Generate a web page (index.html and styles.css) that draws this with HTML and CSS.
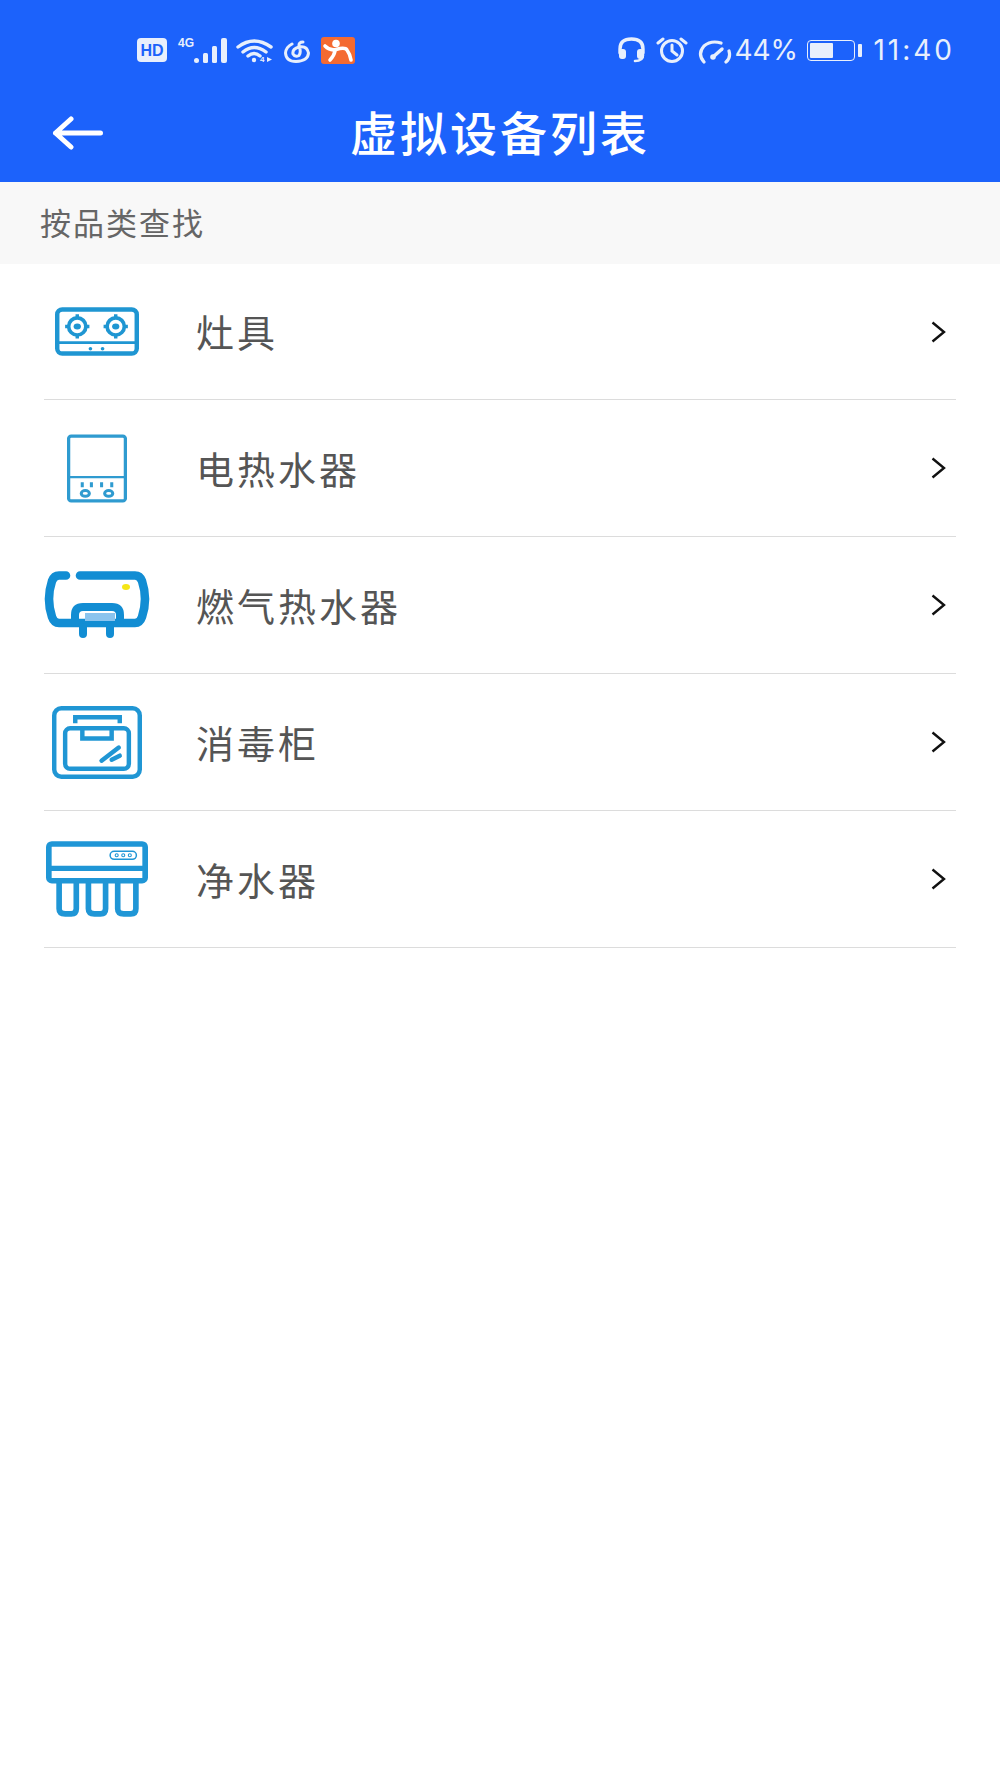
FILE: index.html
```html
<!DOCTYPE html>
<html lang="zh-CN">
<head>
    <meta charset="UTF-8">
    <meta name="viewport" content="width=device-width, initial-scale=1.0">
    <title>虚拟设备列表</title>
    <link rel="stylesheet" href="styles.css">
</head>
<body>
    <header class="header">
        <div class="status-bar">
            <div class="status-left">
                <svg class="st-hd" width="30" height="24" viewBox="0 0 30 24">
                    <rect width="30" height="24" rx="4" fill="#e8effc"/>
                    <text x="15" y="18" text-anchor="middle" class="hd-label">HD</text>
                </svg>
                <span class="st-net">4G</span>
                <svg class="st-signal" width="34" height="25" viewBox="0 0 34 25" fill="#e8effc">
                    <rect x="0" y="20" width="5" height="5" rx="2.5"/>
                    <rect x="9" y="15" width="5" height="10" rx="1.5"/>
                    <rect x="18" y="8" width="5" height="17" rx="1.5"/>
                    <rect x="27" y="0" width="6" height="25" rx="2"/>
                </svg>
                <svg class="st-wifi" width="37" height="25" viewBox="0 0 37 25" fill="none" stroke="#e8effc" stroke-width="3.4" stroke-linecap="round">
                    <path d="M2 9 Q18 -3 35 9"/>
                    <path d="M7 14 Q18 5 30 14"/>
                    <path d="M12 18 Q18 13 24 18"/>
                    <circle cx="18" cy="22" r="2.2" fill="#e8effc" stroke="none"/>
                    <text x="24" y="24" class="wifi-label" stroke="none" fill="#e8effc">4</text>
                    <path d="M31 19 L36 21.5 L31 24 Z" fill="#e8effc" stroke="none"/>
                </svg>
                <svg class="st-music" width="26" height="23" viewBox="0 0 26 23" fill="none" stroke="#e8effc" stroke-width="3" stroke-linecap="round">
                    <path d="M8 4 Q2 7 1.5 13 Q2 21.5 12 21.5 Q24 21 24.5 13 Q23 5.5 15 7 Q8 9 9 14 Q11 17.5 15 15.5 Q17.5 12 15 6 Q14.5 2 19 2"/>
                </svg>
                <svg class="st-app" width="34" height="27" viewBox="0 0 34 27">
                    <rect width="34" height="27" rx="3" fill="#f46a31"/>
                    <circle cx="15" cy="6.5" r="3.8" fill="#fff"/>
                    <path d="M4 9 Q9 14 15 12.5 Q24 10 26 13 Q29 17 30 23 M14 14 Q13 19 9 23" fill="none" stroke="#fff" stroke-width="3.6" stroke-linecap="round"/>
                </svg>
            </div>
            <div class="status-right">
                <svg class="st-phones" width="29" height="26" viewBox="0 0 29 26" fill="none" stroke="#e8effc" stroke-width="3.4" stroke-linecap="round">
                    <path d="M3 16 V12 Q3 2 14.5 2 Q26 2 26 12 V16"/>
                    <rect x="2" y="12" width="7" height="10" rx="3" fill="#e8effc" stroke="none"/>
                    <rect x="20" y="12" width="7" height="10" rx="3" fill="#e8effc" stroke="none"/>
                    <path d="M26 18 Q26 24 18 24" stroke-width="2.6"/>
                </svg>
                <svg class="st-alarm" width="32" height="26" viewBox="0 0 32 26" fill="none" stroke="#e8effc" stroke-width="3" stroke-linecap="round">
                    <circle cx="16" cy="14" r="10.5"/>
                    <path d="M16 8 V14 L21 18"/>
                    <path d="M2 6 L7 2 M30 6 L25 2"/>
                </svg>
                <svg class="st-gauge" width="35" height="24" viewBox="0 0 35 24" fill="none" stroke="#e8effc" stroke-width="3.2" stroke-linecap="round">
                    <path d="M7 22 Q0 14 7 6 Q14 0 24 3"/>
                    <path d="M32 11 Q34 18 29 22"/>
                    <path d="M16 17 L25 9" stroke-width="3.4"/>
                    <circle cx="16" cy="17" r="2.8" fill="#e8effc" stroke="none"/>
                </svg>
                <span class="st-battery-pct">44%</span>
                <div class="battery">
                    <div class="battery-body"><div class="battery-level" style="width: 53%"></div></div>
                    <div class="battery-tip"></div>
                </div>
                <span class="st-time">11:40</span>
            </div>
        </div>
        <div class="nav-bar">
            <svg class="back-arrow" width="51" height="34" viewBox="0 0 51 34" fill="none" stroke="#fff" stroke-width="5" stroke-linecap="round" stroke-linejoin="round">
                <path d="M48.5 17 H3.5 M19 3 L3.5 17 L19 31"/>
            </svg>
            <h1 class="nav-title">虚拟设备列表</h1>
        </div>
    </header>

    <div class="section-label">按品类查找</div>

    <ul class="device-list">
        <li class="device-row">
            <div class="device-icon">
                <svg width="84" height="49" viewBox="0 0 83 48" fill="none" stroke="#1f96d2" stroke-width="4.4">
                    <rect x="2.2" y="2.2" width="78.6" height="43.6" rx="5"/>
                    <path d="M2 35 H81" stroke-width="2.8"/>
                    <circle cx="22" cy="19" r="8.5" stroke-width="3.6"/>
                    <circle cx="60" cy="19" r="8.5" stroke-width="3.6"/>
                    <ellipse cx="22" cy="19" rx="3.6" ry="3" fill="#1f96d2" stroke="none"/>
                    <ellipse cx="60" cy="19" rx="3.6" ry="3" fill="#1f96d2" stroke="none"/>
                    <path d="M22 7 V11 M22 27 V31 M10 19 H14 M30 19 H34 M60 7 V11 M60 27 V31 M48 19 H52 M68 19 H72" stroke-width="3.4"/>
                    <circle cx="35" cy="41" r="1.8" fill="#1f96d2" stroke="none"/>
                    <circle cx="47" cy="41" r="1.8" fill="#1f96d2" stroke="none"/>
                </svg>
            </div>
            <span class="device-name">灶具</span>
            <svg class="chevron" width="15" height="22" viewBox="0 0 15 22" fill="none" stroke="#111" stroke-width="2.4"><path d="M1.5 1.5 L13 11 L1.5 20.5"/></svg>
        </li>
        <li class="device-row">
            <div class="device-icon">
                <svg width="60" height="69" viewBox="0 0 59 67" fill="none" stroke="#2f9bd0" stroke-width="3.2">
                    <rect x="1.6" y="1.6" width="55.8" height="63.8" rx="2.5"/>
                    <path d="M1.5 42 H57.5" stroke-width="2.4"/>
                    <path d="M15 47 V52 M24 47 V52 M34 47 V52 M44 47 V52" stroke-width="3"/>
                    <ellipse cx="18" cy="58" rx="4" ry="2.8" stroke-width="3"/>
                    <ellipse cx="41" cy="58" rx="4" ry="2.8" stroke-width="3"/>
                </svg>
            </div>
            <span class="device-name">电热水器</span>
            <svg class="chevron" width="15" height="22" viewBox="0 0 15 22" fill="none" stroke="#111" stroke-width="2.4"><path d="M1.5 1.5 L13 11 L1.5 20.5"/></svg>
        </li>
        <li class="device-row">
            <div class="device-icon">
                <svg width="107" height="70" viewBox="0 0 106 68" fill="none" stroke="#128dd3" stroke-width="8.6" stroke-linecap="round" stroke-linejoin="round">
                    <path d="M22 4.5 H15 Q10 4.5 8 10 Q2 28 8 46 Q10 52 15 52 H91 Q96 52 98 46 Q104 28 98 10 Q96 4.5 91 4.5 H36"/>
                    <path d="M31 52 V44 Q31 36 39 36 H68 Q76 36 76 44 V52" stroke-width="8"/>
                    <rect x="41" y="42" width="30" height="8" fill="#8bc4ee" stroke="none"/>
                    <path d="M39 56 V63 M66 56 V63" stroke-width="8"/>
                    <ellipse cx="82" cy="16" rx="4" ry="3" fill="#f5e616" stroke="none"/>
                </svg>
            </div>
            <span class="device-name">燃气热水器</span>
            <svg class="chevron" width="15" height="22" viewBox="0 0 15 22" fill="none" stroke="#111" stroke-width="2.4"><path d="M1.5 1.5 L13 11 L1.5 20.5"/></svg>
        </li>
        <li class="device-row">
            <div class="device-icon">
                <svg width="90" height="73" viewBox="0 0 89 72" fill="none" stroke="#2096d4" stroke-width="4.4" stroke-linecap="round">
                    <rect x="2.2" y="2.2" width="84.6" height="67.6" rx="7"/>
                    <rect x="13" y="22" width="63" height="40" rx="5"/>
                    <path d="M23 17 V11 H67 V17" stroke-linecap="butt"/>
                    <path d="M30 22 V32 H59 V22" stroke-linecap="butt"/>
                    <path d="M49 54 L66 41 M59 53 L67 49"/>
                </svg>
            </div>
            <span class="device-name">消毒柜</span>
            <svg class="chevron" width="15" height="22" viewBox="0 0 15 22" fill="none" stroke="#111" stroke-width="2.4"><path d="M1.5 1.5 L13 11 L1.5 20.5"/></svg>
        </li>
        <li class="device-row">
            <div class="device-icon">
                <svg width="102" height="76" viewBox="0 0 101 75" fill="none" stroke="#1f96d6" stroke-width="5.6">
                    <path d="M13 40 V67 Q13 72 19 72 H25 Q30 72 30 67 V40"/>
                    <path d="M42 40 V67 Q42 72 48 72 H54 Q59 72 59 67 V40"/>
                    <path d="M71 40 V67 Q71 72 77 72 H84 Q89 72 89 67 V40"/>
                    <rect x="2.8" y="2.8" width="95.4" height="36.4" rx="3"/>
                    <path d="M2 27 H99" stroke-width="5.4"/>
                    <rect x="63.5" y="10" width="26" height="8" rx="4" stroke-width="1.5"/>
                    <circle cx="70" cy="14" r="1.5" stroke-width="1.1"/>
                    <circle cx="76.5" cy="14" r="1.5" stroke-width="1.1"/>
                    <circle cx="83" cy="14" r="1.5" stroke-width="1.1"/>
                </svg>
            </div>
            <span class="device-name">净水器</span>
            <svg class="chevron" width="15" height="22" viewBox="0 0 15 22" fill="none" stroke="#111" stroke-width="2.4"><path d="M1.5 1.5 L13 11 L1.5 20.5"/></svg>
        </li>
    </ul>
</body>
</html>
```

FILE: styles.css
```css
* { box-sizing: border-box; }
html, body { margin: 0; padding: 0; }
body {
    width: 1000px;
    min-height: 1778px;
    background: #fff;
    font-family: "Liberation Sans", "Noto Sans CJK SC", sans-serif;
}

/* blue top area */
.header {
    height: 182px;
    background: #1c62fb;
    color: #fff;
}
.status-bar {
    height: 100px;
    padding: 0 45px 0 137px;
    display: flex;
    align-items: center;
    justify-content: space-between;
}
.status-left, .status-right {
    display: flex;
    align-items: center;
}
.st-net {
    margin: -14px 0 0 11px;
    width: 17px;
    font: bold 12px "Liberation Sans", sans-serif;
    color: #e8effc;
}
.st-signal { margin-left: -1px; }
.st-wifi { margin-left: 8px; }
.st-music { margin-left: 11px; margin-top: 3px; }
.st-app { margin-left: 11px; }
.hd-label { font: bold 16px "Liberation Sans", sans-serif; fill: #1c62fb; }
.wifi-label { font: bold 8px "Liberation Sans", sans-serif; }
.st-alarm { margin-left: 10px; }
.st-gauge { margin-left: 9px; margin-top: 3px; }
.st-battery-pct, .st-time {
    font-family: Inter, "Liberation Sans", sans-serif;
    font-size: 28px;
    color: #e8effc;
}
.st-battery-pct { margin-left: 2px; width: 64px; }
.battery {
    margin-left: 9px;
    display: flex;
    align-items: center;
}
.battery-body {
    width: 48px;
    height: 21px;
    padding: 2px;
    border: 1.5px solid #e8effc;
    border-radius: 4px;
}
.battery-level {
    height: 100%;
    background: #e8effc;
    border-radius: 1px;
}
.battery-tip {
    margin-left: 3px;
    width: 4px;
    height: 13px;
    background: #e8effc;
    border-radius: 1px;
}
.st-time { margin-left: 11px; letter-spacing: 3px; }

.nav-bar {
    height: 82px;
    padding-left: 52px;
    position: relative;
    display: flex;
    align-items: center;
}
.back-arrow { margin-top: -17px; }
.nav-title {
    position: absolute;
    left: 0;
    right: 0;
    top: 9px;
    margin: 0;
    text-align: center;
    font-size: 47px;
    line-height: 52px;
    font-weight: 500;
    letter-spacing: 3px;
}

/* category label */
.section-label {
    height: 82px;
    padding-left: 40px;
    background: #f8f8f8;
    color: #666;
    font-size: 31px;
    line-height: 86px;
    letter-spacing: 2px;
}

/* list */
.device-list {
    list-style: none;
    margin: 0;
    padding: 0 44px;
}
.device-row {
    height: 137px;
    display: flex;
    align-items: center;
    border-bottom: 1px solid #dcdcdc;
}
.device-row:first-child { height: 136px; }
.device-icon {
    width: 108px;
    margin-right: 44px;
    padding-right: 2px;
    display: flex;
    justify-content: center;
}
.device-icon svg { display: block; }
.device-name {
    flex: 1;
    margin-top: -2px;
    color: #555;
    font-size: 38px;
    letter-spacing: 3px;
}
.chevron { margin-right: 10px; }
```
